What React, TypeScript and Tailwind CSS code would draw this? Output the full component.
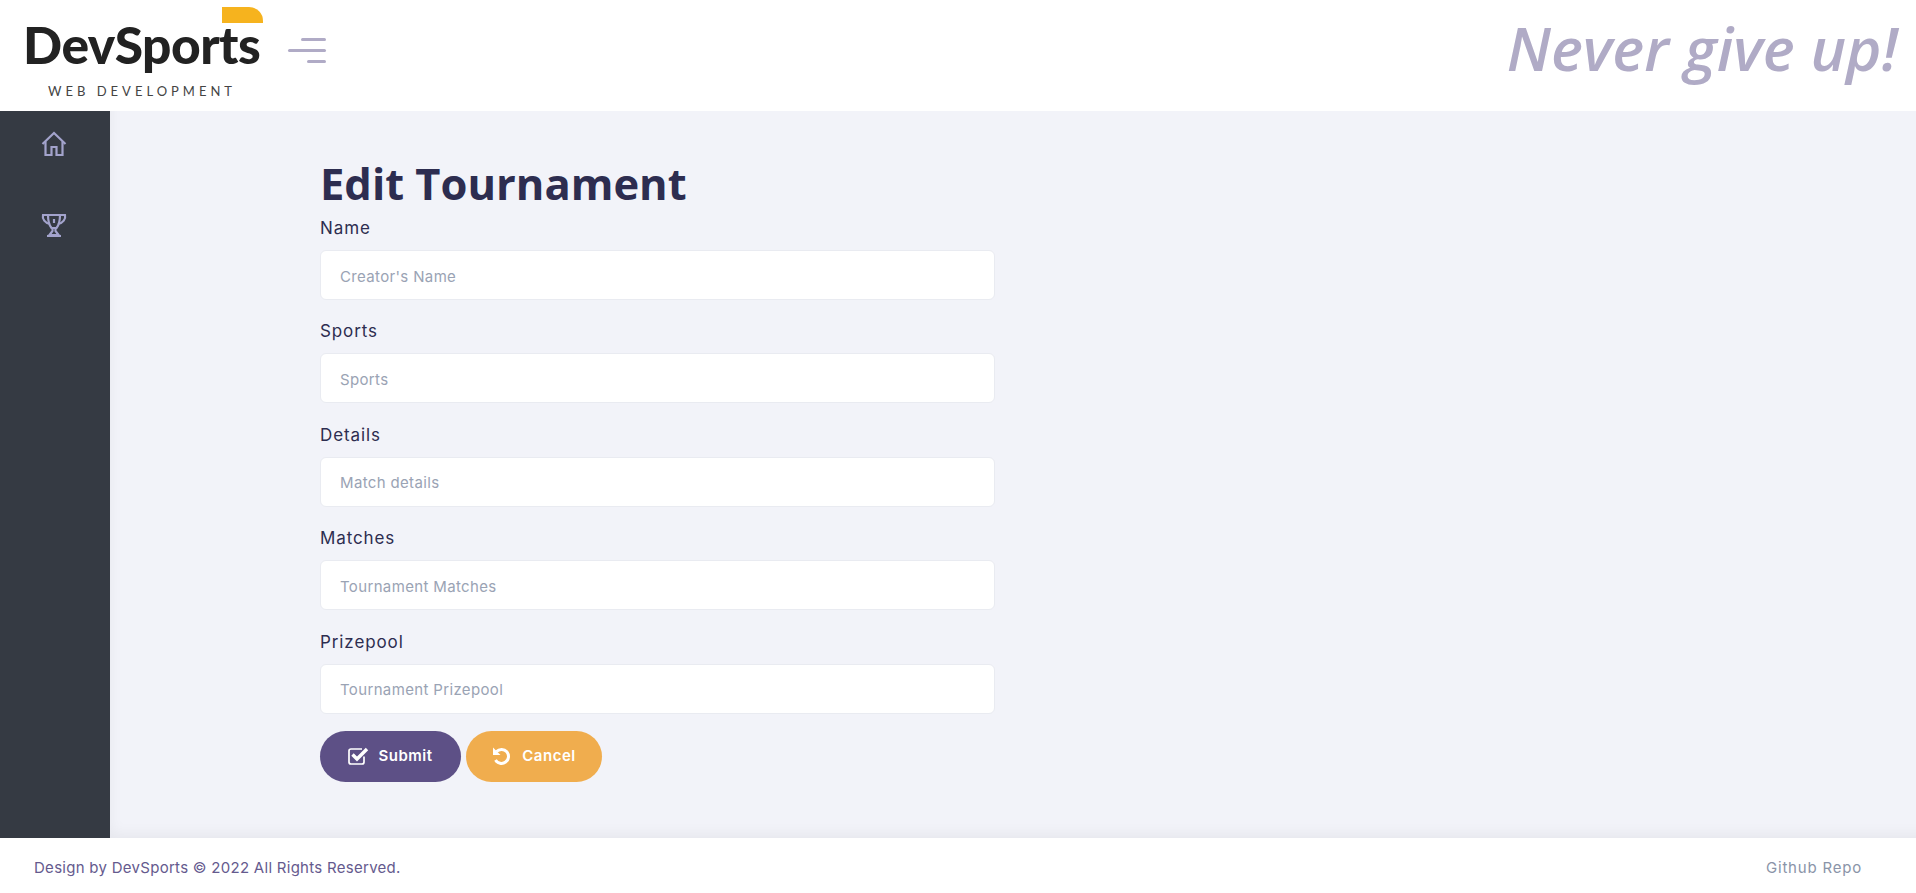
const fields = [
  { label: "Name", placeholder: "Creator's Name" },
  { label: "Sports", placeholder: "Sports" },
  { label: "Details", placeholder: "Match details" },
  { label: "Matches", placeholder: "Tournament Matches" },
  { label: "Prizepool", placeholder: "Tournament Prizepool" },
];

// Logo drawn with real text plus the yellow tab
function Logo() {
  return (
    <div className="relative w-[250px] h-[111px] shrink-0">
      <div className="absolute left-[222px] top-[7px] w-[41px] h-[16px] bg-[#f6b31e] rounded-tr-[14px]" />
      <div className="absolute left-[23px] top-[10px] font-['Lato',sans-serif] font-black text-[51.5px] leading-[68px] tracking-[-0.5px] text-[#222222] whitespace-nowrap">
        DevSports
      </div>
      <div className="absolute left-[48px] top-[82px] font-['Lato',sans-serif] text-[13px] leading-[18px] tracking-[4px] text-[#444444] whitespace-nowrap">
        WEB DEVELOPMENT
      </div>
    </div>
  );
}

function MenuIcon() {
  return (
    <div className="ml-[38px] mb-[10px] flex flex-col items-end gap-[8px] w-[38px]">
      <span className="block w-[25px] h-[3px] bg-[#b0abc6] rounded" />
      <span className="block w-[38px] h-[3px] bg-[#b0abc6] rounded" />
      <span className="block w-[19px] h-[3px] bg-[#b0abc6] rounded" />
    </div>
  );
}

function HomeIcon() {
  return (
    <svg width="26" height="26" viewBox="0 0 26 26" fill="none" stroke="#a3a3cc" strokeWidth="2.2">
      <path d="M1.5 13 13 2l11.5 11" />
      <path d="M4.5 10.5V24h6v-8h5v8h6V10.5" />
    </svg>
  );
}

function TrophyIcon() {
  return (
    <svg width="26" height="24" viewBox="0 0 26 24" fill="none" stroke="#a3a3cc" strokeWidth="2.2">
      <path d="M7 2h12c0 5-1 10-3.5 13h-5C8 12 7 7 7 2Z" />
      <path d="M7 2H2c-1 4 2 8 7 9M19 2h5c1 4-2 8-7 9" />
      <path d="M13 6v4" />
      <path d="M11.5 15v3l-3 4h9l-3-4v-3" />
      <path d="M6 23h14" />
    </svg>
  );
}

function CheckIcon() {
  return (
    <svg width="21" height="18" viewBox="0 0 21 18" fill="none" stroke="white">
      <path d="M16 9.5V15a2 2 0 0 1-2 2H3a2 2 0 0 1-2-2V4a2 2 0 0 1 2-2h11" strokeWidth="1.7" />
      <path d="M4.5 7.5 9 12 19 2" strokeWidth="3.4" />
    </svg>
  );
}

function UndoIcon() {
  return (
    <svg width="20" height="20" viewBox="0 0 20 20" fill="none">
      <path d="M4.5 5.5A7 7 0 1 1 3.5 14" stroke="white" strokeWidth="3" />
      <path d="M1 1.5V9h7.5Z" fill="white" />
    </svg>
  );
}

export default function App() {
  return (
    <div className="flex flex-col h-[893px] overflow-hidden bg-white font-['Inter',sans-serif]">
      {/* Header */}
      <header className="flex items-center justify-between h-[111px] shrink-0 bg-white pr-[18px]">
        <div className="flex items-center">
          <Logo />
          <MenuIcon />
        </div>
        <div className="mb-[14px] font-['Open_Sans',sans-serif] italic font-semibold text-[60.5px] leading-none text-[#b0abc6] whitespace-nowrap">
          Never give up!
        </div>
      </header>

      <div className="flex flex-1 min-h-0">
        {/* Sidebar */}
        <aside className="w-[110px] shrink-0 bg-[#353a43] flex flex-col items-center pr-[3px] pt-[20px] gap-[56px]">
          <HomeIcon />
          <TrophyIcon />
        </aside>

        {/* Form */}
        <main className="flex-1 bg-[#f2f3f9] pl-[210px] pt-[44px] shadow-[inset_8px_-12px_14px_-8px_rgba(0,0,0,0.05)]">
          <form className="w-[675px]">
            <h1 className="font-['Open_Sans',sans-serif] font-bold text-[43.5px] leading-[58px] text-[#2d2d50]">
              Edit Tournament
            </h1>
            {fields.map((f) => (
              <div key={f.label} className="h-[103.4px] pt-[3px]">
                <label className="block text-[17px] leading-[24px] text-[#2d2d50] tracking-[0.9px]">
                  {f.label}
                </label>
                <input
                  type="text"
                  placeholder={f.placeholder}
                  className="block w-full h-[50px] mt-[10px] px-[19px] pt-[2px] bg-white border border-[#e9ebf1] rounded-[6px] text-[15px] tracking-[0.35px] placeholder:text-[#9aa3b4] outline-none"
                />
              </div>
            ))}
            <div className="flex gap-[5px] mt-[1px]">
              <button
                type="button"
                className="flex items-center justify-center gap-[9px] w-[141px] h-[51px] rounded-full bg-[#5d5086] text-white text-[15px] tracking-[0.5px] font-semibold"
              >
                <CheckIcon />
                Submit
              </button>
              <button
                type="button"
                className="flex items-center justify-center gap-[10px] w-[136px] h-[51px] rounded-full bg-[#f0ad4e] text-white text-[15px] tracking-[0.5px] font-semibold"
              >
                <UndoIcon />
                Cancel
              </button>
            </div>
          </form>
        </main>
      </div>

      {/* Footer */}
      <footer className="flex items-center justify-between h-[55px] shrink-0 bg-white pl-[34px] pr-[54px] pt-[5px] text-[15px] tracking-[0.28px]">
        <span className="text-[#655a8e]">Design by DevSports © 2022 All Rights Reserved.</span>
        <a className="text-[#8a94a8] tracking-[0.8px]">Github Repo</a>
      </footer>
    </div>
  );
}
